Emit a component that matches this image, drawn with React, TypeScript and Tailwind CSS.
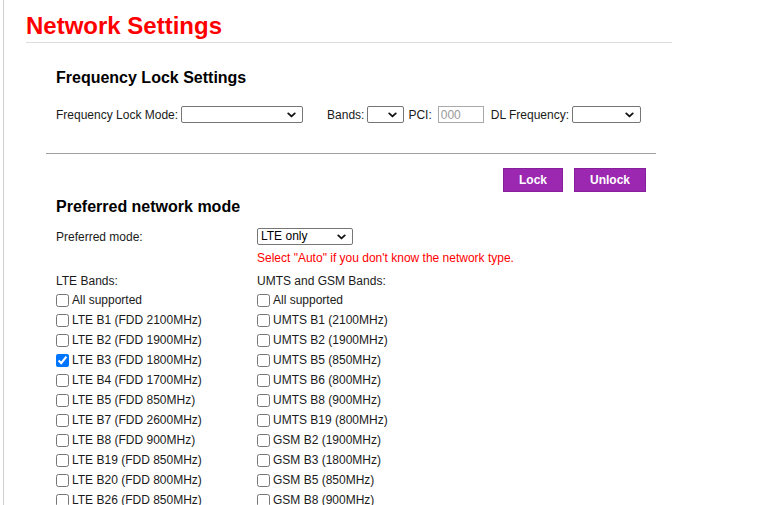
import type { ReactNode } from 'react';

const lteBands = [
  'All supported',
  'LTE B1 (FDD 2100MHz)',
  'LTE B2 (FDD 1900MHz)',
  'LTE B3 (FDD 1800MHz)',
  'LTE B4 (FDD 1700MHz)',
  'LTE B5 (FDD 850MHz)',
  'LTE B7 (FDD 2600MHz)',
  'LTE B8 (FDD 900MHz)',
  'LTE B19 (FDD 850MHz)',
  'LTE B20 (FDD 800MHz)',
  'LTE B26 (FDD 850MHz)',
];

const umtsGsmBands = [
  'All supported',
  'UMTS B1 (2100MHz)',
  'UMTS B2 (1900MHz)',
  'UMTS B5 (850MHz)',
  'UMTS B6 (800MHz)',
  'UMTS B8 (900MHz)',
  'UMTS B19 (800MHz)',
  'GSM B2 (1900MHz)',
  'GSM B3 (1800MHz)',
  'GSM B5 (850MHz)',
  'GSM B8 (900MHz)',
];

// Bands that start out ticked
const checkedBands = ['LTE B3 (FDD 1800MHz)'];

function Chevron() {
  return (
    <svg
      viewBox="0 0 10 6"
      className="pointer-events-none absolute right-[7px] top-1/2 h-[6px] w-[9px] -translate-y-1/2"
      fill="none"
      stroke="#111"
      strokeWidth="2"
      strokeLinecap="round"
      strokeLinejoin="round"
      aria-hidden="true">
      <path d="M1.4 1.2 5 4.6l3.6-3.4" />
    </svg>);

}

function Dropdown({ className, options }: { className: string; options: string[] }) {
  return (
    <div className={`relative h-[17px] ${className}`}>
      <select className="h-full w-full appearance-none rounded-[2px] border border-[#767676] bg-white pl-[3px] pr-5 text-[12px] leading-[15px] text-black outline-none">
        {options.map((o) =>
        <option key={o} value={o}>
            {o}
          </option>
        )}
      </select>
      <Chevron />
    </div>);

}

function BandCheck({ label }: { label: string }) {
  return (
    <label className="flex h-5 items-center">
      <input
        type="checkbox"
        defaultChecked={checkedBands.includes(label)}
        className="h-[13px] w-[13px] shrink-0 accent-[#0075ff]" />

      <span className="ml-[3px] whitespace-nowrap">{label}</span>
    </label>);

}

function Heading({ children, className = '' }: { children: ReactNode; className?: string }) {
  return <h2 className={`text-[16px] font-bold leading-[18px] text-black ${className}`}>{children}</h2>;
}

export default function App() {
  return (
    <div
      className="ml-[3px] min-h-screen border-l border-[#cfcfcf] bg-white text-[12px] leading-[14px] text-[#1a1a1a]"
      style={{ fontFamily: '"Liberation Sans", Arial, sans-serif' }}>

      <div className="w-[668px] pl-[22px] pt-3">
        <h1 className="text-[24px] font-bold leading-[28px] text-[#ff0000]">Network Settings</h1>
        <div className="mt-[2px] h-px bg-[#dddddd]" />

        <div className="ml-[20px] w-[610px]">
          {/* Frequency lock */}
          <div className="pl-[10px]">
            <Heading className="mt-[26px]">Frequency Lock Settings</Heading>
            <div className="mt-[19px] flex h-[17px] items-center">
              <span>Frequency Lock Mode:</span>
              <Dropdown className="ml-[3px] w-[122px]" options={['']} />
              <span className="ml-[24px]">Bands:</span>
              <Dropdown className="ml-[3px] w-[37px]" options={['']} />
              <span className="ml-[4px]">PCI:</span>
              <input
                type="text"
                placeholder="000"
                className="ml-[6px] h-[17px] w-[46px] border border-[#a9a9a9] bg-white px-[2px] text-[12px] text-black outline-none placeholder:text-[#9a9a9a]" />

              <span className="ml-[7px]">DL Frequency:</span>
              <Dropdown className="ml-[3px] w-[69px]" options={['']} />
            </div>
          </div>

          <div className="mt-[30px] h-px bg-[#a0a0a0]" />

          <div className="mt-[14px] flex justify-end gap-[11px] pr-[10px]">
            <button className="h-[24px] w-[60px] border border-[#86209a] bg-[#9c27b0] text-[12px] font-bold text-white">
              Lock
            </button>
            <button className="h-[24px] w-[72px] border border-[#86209a] bg-[#9c27b0] text-[12px] font-bold text-white">
              Unlock
            </button>
          </div>

          {/* Preferred network mode */}
          <div className="pl-[10px]">
            <Heading className="mt-[6px]">Preferred network mode</Heading>
            <div className="mt-[12px] flex h-[17px] items-center">
              <span className="w-[201px]">Preferred mode:</span>
              <Dropdown className="w-[96px]" options={['LTE only', 'Auto', '3G only', '2G only']} />
            </div>
            <p className="mt-[6px] pl-[201px] text-[#ff0000]">Select "Auto" if you don't know the network type.</p>

            <div className="mt-[9px] flex">
              <div className="w-[201px]">
                <div>LTE Bands:</div>
                <div className="mt-[2px]">
                  {lteBands.map((b) =>
                  <BandCheck key={b} label={b} />
                  )}
                </div>
              </div>
              <div>
                <div>UMTS and GSM Bands:</div>
                <div className="mt-[2px]">
                  {umtsGsmBands.map((b) =>
                  <BandCheck key={b + '-2g3g'} label={b} />
                  )}
                </div>
              </div>
            </div>
          </div>
        </div>
      </div>
    </div>);

}
